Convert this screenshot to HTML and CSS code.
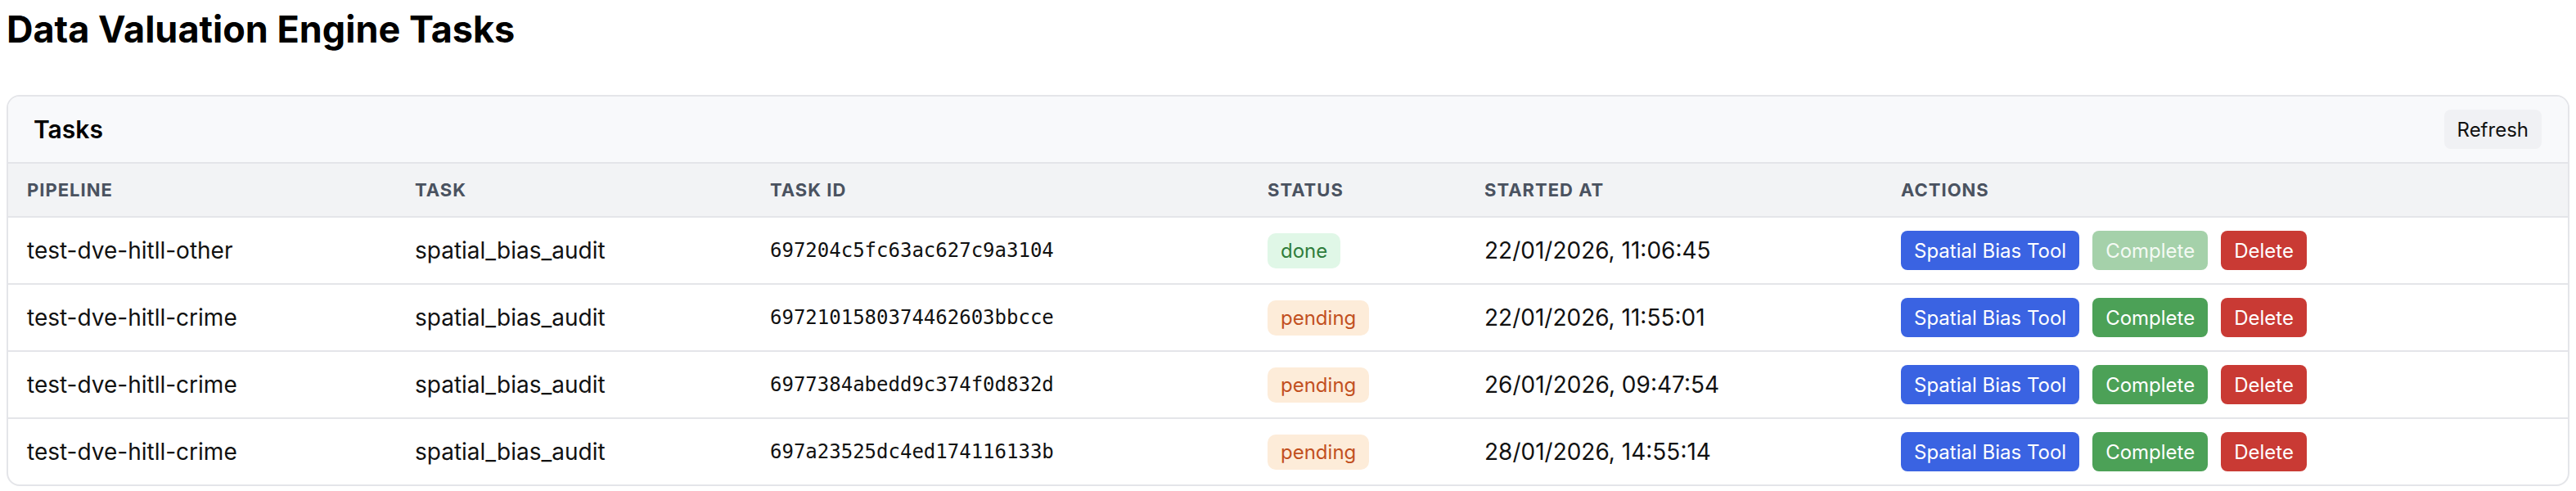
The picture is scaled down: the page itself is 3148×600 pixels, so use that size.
FILE: index.html
```html
<!DOCTYPE html>
<html lang="en">
<head>
    <meta charset="UTF-8">
    <meta name="viewport" content="width=device-width, initial-scale=1.0">
    <title>Data Valuation Engine Tasks</title>
    <link rel="stylesheet" href="styles.css">
</head>
<body>
    <h1>Data Valuation Engine Tasks</h1>
    <div class="card">
        <div class="card-head">
            <h2>Tasks</h2>
            <button class="btn-refresh">Refresh</button>
        </div>
        <table class="tasks">
            <colgroup>
                <col class="col-pipeline">
                <col class="col-task">
                <col class="col-id">
                <col class="col-status">
                <col class="col-started">
                <col>
            </colgroup>
            <thead>
                <tr>
                    <th>Pipeline</th>
                    <th>Task</th>
                    <th>Task ID</th>
                    <th>Status</th>
                    <th>Started At</th>
                    <th>Actions</th>
                </tr>
            </thead>
            <tbody>
                <tr>
                    <td>test-dve-hitll-other</td>
                    <td>spatial_bias_audit</td>
                    <td class="mono">697204c5fc63ac627c9a3104</td>
                    <td><span class="badge done">done</span></td>
                    <td>22/01/2026, 11:06:45</td>
                    <td>
                        <div class="actions">
                            <button class="btn blue">Spatial Bias Tool</button>
                            <button class="btn green" disabled>Complete</button>
                            <button class="btn red">Delete</button>
                        </div>
                    </td>
                </tr>
                <tr>
                    <td>test-dve-hitll-crime</td>
                    <td>spatial_bias_audit</td>
                    <td class="mono">6972101580374462603bbcce</td>
                    <td><span class="badge pending">pending</span></td>
                    <td>22/01/2026, 11:55:01</td>
                    <td>
                        <div class="actions">
                            <button class="btn blue">Spatial Bias Tool</button>
                            <button class="btn green">Complete</button>
                            <button class="btn red">Delete</button>
                        </div>
                    </td>
                </tr>
                <tr>
                    <td>test-dve-hitll-crime</td>
                    <td>spatial_bias_audit</td>
                    <td class="mono">6977384abedd9c374f0d832d</td>
                    <td><span class="badge pending">pending</span></td>
                    <td>26/01/2026, 09:47:54</td>
                    <td>
                        <div class="actions">
                            <button class="btn blue">Spatial Bias Tool</button>
                            <button class="btn green">Complete</button>
                            <button class="btn red">Delete</button>
                        </div>
                    </td>
                </tr>
                <tr>
                    <td>test-dve-hitll-crime</td>
                    <td>spatial_bias_audit</td>
                    <td class="mono">697a23525dc4ed174116133b</td>
                    <td><span class="badge pending">pending</span></td>
                    <td>28/01/2026, 14:55:14</td>
                    <td>
                        <div class="actions">
                            <button class="btn blue">Spatial Bias Tool</button>
                            <button class="btn green">Complete</button>
                            <button class="btn red">Delete</button>
                        </div>
                    </td>
                </tr>
            </tbody>
        </table>
    </div>
</body>
</html>
```

FILE: styles.css
```css
body {
    font-family: Inter, 'Noto Sans', sans-serif;
    margin: 8px;
    color: #111;
    background: white;
}
h1 {
    font-size: 45px;
    font-weight: 700;
    line-height: 54px;
    margin: 1px 0 53px;
    color: #000;
}
.card {
    border: 2px solid #e4e5e9;
    border-radius: 16px;
    overflow: hidden;
}
.card-head {
    display: flex;
    justify-content: space-between;
    align-items: center;
    height: 80px;
    padding: 0 32px 0 31px;
    background: #f8f9fb;
    border-bottom: 2px solid #e4e5e9;
}
.card-head h2 {
    margin: 0;
    font-size: 30px;
    font-weight: 600;
    color: #000;
}
.btn-refresh {
    font-family: inherit;
    font-size: 24px;
    height: 48px;
    padding: 0 16px;
    border: none;
    border-radius: 8px;
    background: #f0f1f4;
    color: #111;
}
.tasks {
    width: 100%;
    border-collapse: collapse;
    table-layout: fixed;
}
.col-pipeline { width: 474px; }
.col-task { width: 434px; }
.col-id { width: 608px; }
.col-status { width: 265px; }
.col-started { width: 509px; }
th {
    height: 64px;
    padding: 0 23px;
    text-align: left;
    font-size: 22px;
    font-weight: 700;
    letter-spacing: 1px;
    text-transform: uppercase;
    color: #4a5260;
    background: #f2f3f5;
    border-bottom: 2px solid #e4e5e9;
}
td {
    height: 80px;
    padding: 0 23px;
    font-size: 28px;
    border-bottom: 2px solid #e4e5e9;
    white-space: nowrap;
}
tbody tr:last-child td {
    border-bottom: none;
}
.mono {
    font-family: 'DejaVu Sans Mono', monospace;
    font-size: 24px;
}
.badge {
    display: inline-block;
    padding: 8px 16px;
    line-height: 27px;
    border-radius: 10px;
    font-size: 24px;
}
.done {
    background: #e0f7e7;
    color: #2f7d3c;
}
.pending {
    background: #fdecd9;
    color: #c2501f;
}
.actions {
    display: flex;
    gap: 16px;
    align-items: center;
}
.btn {
    font-family: inherit;
    font-size: 24px;
    height: 48px;
    padding: 0 16px;
    border: none;
    border-radius: 8px;
    color: white;
}
.blue { background: #3a63e2; }
.green { background: #4ca157; }
.green:disabled { background: #a5d1aa; color: #f4faf4; }
.red { background: #c93a34; }
```
